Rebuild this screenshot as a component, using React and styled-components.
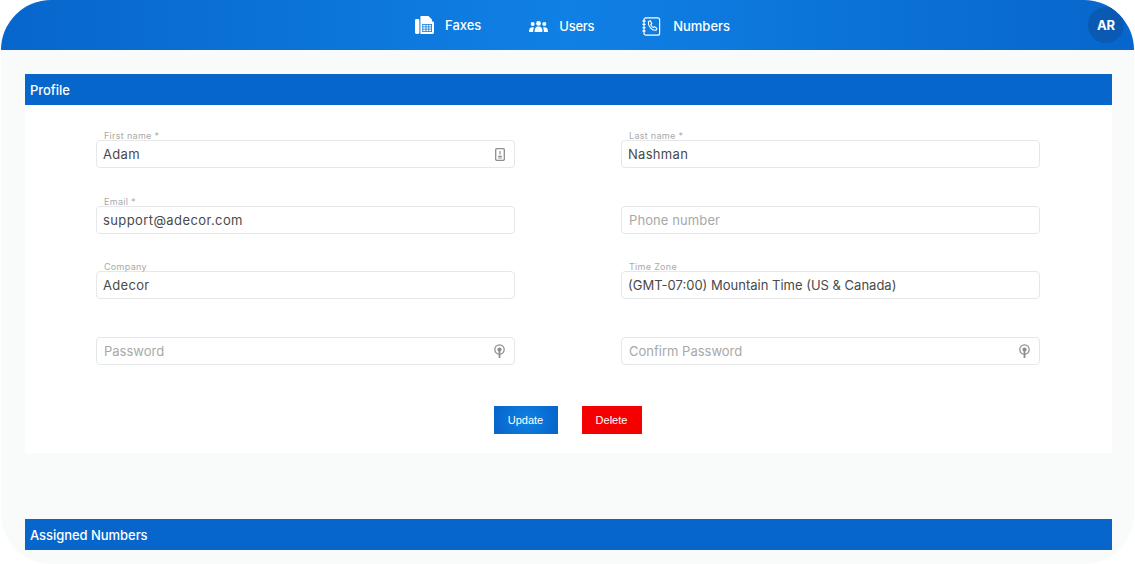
import styled, { createGlobalStyle } from 'styled-components'

const GlobalStyle = createGlobalStyle`
  * {
    box-sizing: border-box;
  }

  html, body {
    margin: 0;
    padding: 0;
    background: #fff;
    font-family: Inter, "Open Sans", sans-serif;
  }
`

const FaxIcon = () => (
  <svg width="19" height="18" viewBox="0 0 19 18" fill="#fff">
    <rect x="0" y="3" width="4.4" height="15" rx="1.4" />
    <path d="M5.4 5.5V1c0-.6.4-1 1-1h7l3.6 3.4v2.1h.6c.8 0 1.4.6 1.4 1.4v9.7c0 .8-.6 1.4-1.4 1.4H5.4z" />
    <g fill="#1176dc">
      <path d="M7.4 8h9.6v.8H7.4zM7.4 10.4h9.6v.8H7.4zM7.4 12.8h9.6v.8H7.4zM7.4 15.2h9.6v.8H7.4z" />
      <path d="M7.4 8h.8v8h-.8zM10.6 8h.8v8h-.8zM13.4 8h.8v8h-.8zM16.2 8h.8v8h-.8z" />
    </g>
  </svg>
)

const UsersIcon = () => (
  <svg width="19" height="11" viewBox="0 0 19 11" fill="#fff">
    <circle cx="9.5" cy="2.4" r="2.4" />
    <path d="M5.6 11c0-3.4 1-5.4 3.9-5.4s3.9 2 3.9 5.4z" />
    <circle cx="3.7" cy="3" r="2" />
    <path d="M0 11c0-3 .8-4.8 3.6-4.8.6 0 1 .1 1.4.3-.6 1.1-.9 2.6-.9 4.5z" />
    <circle cx="15.3" cy="3" r="2" />
    <path d="M19 11c0-3-.8-4.8-3.6-4.8-.6 0-1 .1-1.4.3.6 1.1.9 2.6.9 4.5z" />
  </svg>
)

const NumbersIcon = () => (
  <svg width="19" height="19" viewBox="0 0 19 19" fill="none" stroke="#fff">
    <rect x="2" y="0.8" width="15.6" height="17.4" rx="2" strokeWidth="1.2" />
    <path d="M0.5 4h3M0.5 7.3h3M0.5 10.6h3M0.5 14h3" strokeWidth="1.3" />
    <path d="M6.4 4.4l1.9-.7 1.5 2.9-1.1 1c.5 1.4 1.4 2.4 2.7 3l1.1-1 2.4 1.8-.8 1.8c-4 .8-8.4-3.9-7.7-8.8z" strokeWidth="1.1" />
  </svg>
)

const NoteIcon = () => (
  <svg width="10" height="13" viewBox="0 0 10 13" fill="none" stroke="#8d8d8d">
    <rect x="0.7" y="0.7" width="8.6" height="11.6" rx="1" strokeWidth="1.3" />
    <path d="M5 3v3.4M3.2 8.4h3.6M3.2 10h3.6" strokeWidth="1.2" />
  </svg>
)

const SecretIcon = () => (
  <svg width="11" height="14" viewBox="0 0 11 14" fill="none" stroke="#8d8d8d">
    <circle cx="5.5" cy="5.5" r="4.7" strokeWidth="1.2" />
    <circle cx="5.5" cy="5.5" r="2.1" fill="#8d8d8d" stroke="none" />
    <path d="M5.5 7v7" strokeWidth="1.8" />
  </svg>
)

const Frame = styled.div`
  width: 1133px;
  height: 564px;
  margin-left: 1px;
  border-radius: 50px;
  background: #f9fafa;
  overflow: hidden;
`

const Header = styled.header`
  height: 50px;
  display: flex;
  align-items: center;
  padding: 2px 0 0 414px;
  position: relative;
  background: linear-gradient(90deg, #0766cc 0%, #1080e4 50%, #0766cc 100%);
`

const Nav = styled.nav`
  display: flex;
  align-items: center;
  gap: 48px;
`

const NavItem = styled.a`
  display: flex;
  align-items: center;
  gap: ${props => props.$gap}px;
  margin-bottom: ${props => props.$lift || 0}px;
  color: #fff;
  font-size: 13px;
  font-weight: 500;
  letter-spacing: ${props => props.$spacing || 0}px;
`

const Avatar = styled.div`
  position: absolute;
  top: 7px;
  right: 10px;
  width: 36px;
  height: 36px;
  border-radius: 50%;
  background: #0a5ab4;
  color: #fff;
  font-size: 13px;
  font-weight: 700;
  display: flex;
  align-items: center;
  justify-content: center;
`

const Main = styled.main`
  padding: 24px 22px 0 24px;
`

const SectionTitle = styled.h2`
  margin: 0;
  height: 31px;
  padding-left: 5px;
  display: flex;
  align-items: center;
  background: #0766cc;
  color: #fff;
  font-size: 13px;
  font-weight: 500;
  letter-spacing: -0.05px;
`

const Card = styled.section`
  height: 348px;
  margin-bottom: 66px;
  padding: 35px 71px 0 71px;
  background: #fff;
`

const FormGrid = styled.div`
  display: grid;
  grid-template-columns: 419px 419px;
  column-gap: 106px;
  row-gap: 37.6px;
`

const Field = styled.div`
  position: relative;
  height: 28px;
`

const Label = styled.label`
  position: absolute;
  top: -10px;
  left: 8px;
  color: #a9a9a9;
  font-size: 9px;
  line-height: 11px;
  letter-spacing: 0.3px;
`

const Input = styled.div`
  height: 100%;
  padding: 0 6px 0 ${props => props.$placeholder ? 7 : 6}px;
  display: flex;
  align-items: center;
  justify-content: space-between;
  border: 1px solid #e5e7e8;
  border-radius: 4px;
  background: #fff;
  color: ${props => props.$placeholder ? '#a8a8a8' : '#4a4a4a'};
  font-size: 13px;
  letter-spacing: ${props => props.$spacing}px;
`

const IconSlot = styled.span`
  display: flex;
  margin-right: 3px;
`

const Actions = styled.div`
  margin-top: 41px;
  padding-right: 2px;
  display: flex;
  justify-content: center;
  gap: 24px;
`

const Button = styled.button`
  width: ${props => props.$width}px;
  height: 28px;
  border: 0;
  padding: 0;
  color: #fff;
  font-family: "Liberation Sans", Arial, sans-serif;
  font-size: 11px;
  background: ${props => props.$danger ? '#f50000' : 'radial-gradient(circle, #1080e4 0%, #0766cc 90%)'};
`

const fields = [
  { label: 'First name *', value: 'Adam', icon: <NoteIcon />, spacing: 0.3 },
  { label: 'Last name *', value: 'Nashman', spacing: 0.3 },
  { label: 'Email *', value: 'support@adecor.com', spacing: 0.4 },
  { placeholder: 'Phone number', spacing: 0.1 },
  { label: 'Company', value: 'Adecor', spacing: 0.3 },
  { label: 'Time Zone', value: '(GMT-07:00) Mountain Time (US & Canada)', spacing: 0 },
  { placeholder: 'Password', icon: <SecretIcon />, spacing: 0 },
  { placeholder: 'Confirm Password', icon: <SecretIcon />, spacing: 0 },
]

const App = () => {
  return (
    <>
      <GlobalStyle />
      <Frame>
        <Header>
          <Nav>
            <NavItem $gap={11} $lift={3}><FaxIcon />Faxes</NavItem>
            <NavItem $gap={11} $spacing={-0.3}><UsersIcon />Users</NavItem>
            <NavItem $gap={12}><NumbersIcon />Numbers</NavItem>
          </Nav>
          <Avatar>AR</Avatar>
        </Header>
        <Main>
          <SectionTitle>Profile</SectionTitle>
          <Card>
            <FormGrid>
              {fields.map((field, index) => (
                <Field key={index}>
                  {field.label && <Label>{field.label}</Label>}
                  <Input $placeholder={!field.value} $spacing={field.spacing}>
                    {field.value || field.placeholder}
                    {field.icon && <IconSlot>{field.icon}</IconSlot>}
                  </Input>
                </Field>
              ))}
            </FormGrid>
            <Actions>
              <Button $width={64}>Update</Button>
              <Button $width={60} $danger>Delete</Button>
            </Actions>
          </Card>
          <SectionTitle>Assigned Numbers</SectionTitle>
        </Main>
      </Frame>
    </>
  )
}

export default App
